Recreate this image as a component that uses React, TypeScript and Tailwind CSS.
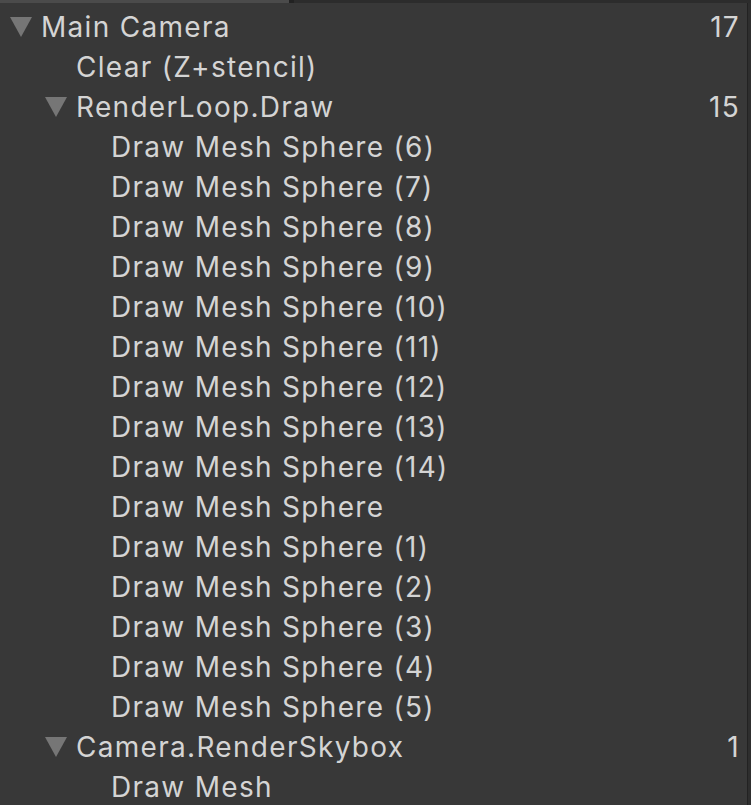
import React from "react";

type Row = { label: string; level: number; open?: boolean; count?: string };

const rows: Row[] = [
  { label: "Main Camera", level: 0, open: true, count: "17" },
  { label: "Clear (Z+stencil)", level: 1 },
  { label: "RenderLoop.Draw", level: 1, open: true, count: "15" },
  ...["(6)", "(7)", "(8)", "(9)", "(10)", "(11)", "(12)", "(13)", "(14)", "", "(1)", "(2)", "(3)", "(4)", "(5)"].map(
    (s) => ({ label: s ? `Draw Mesh Sphere ${s}` : "Draw Mesh Sphere", level: 2 })
  ),
  { label: "Camera.RenderSkybox", level: 1, open: true, count: "1" },
  { label: "Draw Mesh", level: 2 },
];

function Tri() {
  return (
    <svg width="22" height="20" viewBox="0 0 22 20" className="shrink-0">
      <path d="M0 0 H22 L11 20 Z" fill="#767676" />
    </svg>
  );
}

export default function App() {
  return (
    <div className="w-[751px] h-[805px] overflow-hidden bg-[#383838] flex flex-col" style={{ fontFamily: "Inter, 'Noto Sans', sans-serif" }}>
      <div className="flex h-[3px] shrink-0">
        <div className="w-[289px] bg-[#4b4b4b]" />
        <div className="w-[5px] bg-[#222222]" />
        <div className="flex-1 bg-[#2c2c2c]" />
      </div>
      <div className="flex flex-1 min-h-0">
        <div className="flex-1 flex flex-col pt-[4px]">
          {rows.map((r, i) => (
            <div key={i} className="h-[40px] flex items-center shrink-0 pr-[7px]">
              <div className="flex items-center" style={{ paddingLeft: 10 + r.level * 35 }}>
                <div className="w-[31px] flex items-center">{r.open ? <Tri /> : null}</div>
                <span className="text-[28px] leading-none text-[#d4d4d4] tracking-[1.3px] whitespace-nowrap">{r.label}</span>
              </div>
              <div className="flex-1" />
              {r.count && <span className="text-[28px] leading-none text-[#d4d4d4] tracking-[1.3px]">{r.count}</span>}
            </div>
          ))}
        </div>
        <div className="w-[1px] bg-[#222222]" />
        <div className="w-[3px] bg-[#2e2e2e]" />
      </div>
    </div>
  );
}
